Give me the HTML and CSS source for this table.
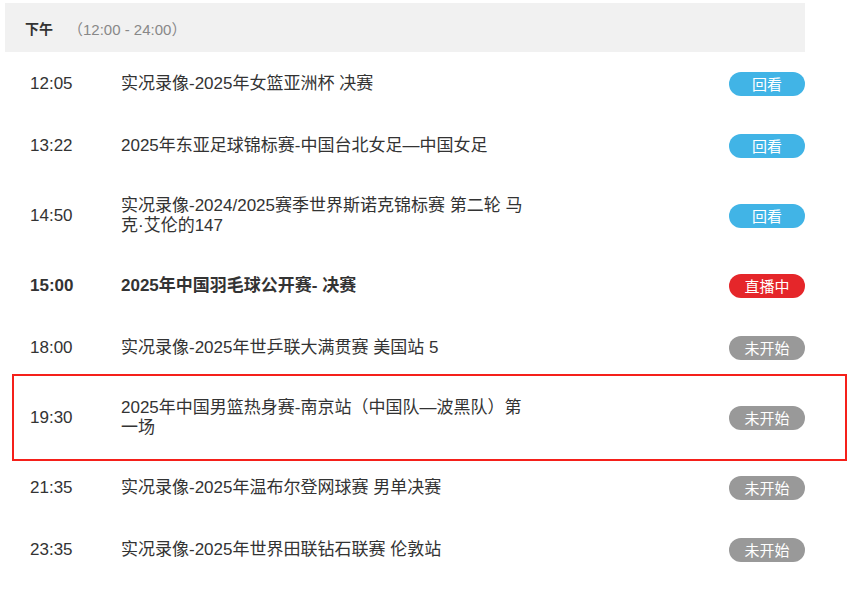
FILE: index.html
```html
<!DOCTYPE html>
<html lang="zh-CN">
<head>
<meta charset="utf-8">
<title>节目单</title>
<link rel="stylesheet" href="styles.css">
</head>
<body>
<div class="schedule">
  <div class="period">
    <span class="period-name">下午</span>
    <span class="period-range">（12:00 - 24:00）</span>
  </div>
  <ul class="list">
    <li class="row">
      <span class="time">12:05</span>
      <span class="title">实况录像-2025年女篮亚洲杯 决赛</span>
      <span class="badge badge-replay">回看</span>
    </li>
    <li class="row">
      <span class="time">13:22</span>
      <span class="title">2025年东亚足球锦标赛-中国台北女足—中国女足</span>
      <span class="badge badge-replay">回看</span>
    </li>
    <li class="row">
      <span class="time">14:50</span>
      <span class="title">实况录像-2024/2025赛季世界斯诺克锦标赛 第二轮 马<br>克·艾伦的147</span>
      <span class="badge badge-replay">回看</span>
    </li>
    <li class="row row-live">
      <span class="time">15:00</span>
      <span class="title">2025年中国羽毛球公开赛- 决赛</span>
      <span class="badge badge-live">直播中</span>
    </li>
    <li class="row">
      <span class="time">18:00</span>
      <span class="title">实况录像-2025年世乒联大满贯赛 美国站 5</span>
      <span class="badge badge-wait">未开始</span>
    </li>
    <li class="row row-marked">
      <span class="time">19:30</span>
      <span class="title">2025年中国男篮热身赛-南京站（中国队—波黑队）第<br>一场</span>
      <span class="badge badge-wait">未开始</span>
    </li>
    <li class="row">
      <span class="time">21:35</span>
      <span class="title">实况录像-2025年温布尔登网球赛 男单决赛</span>
      <span class="badge badge-wait">未开始</span>
    </li>
    <li class="row">
      <span class="time">23:35</span>
      <span class="title">实况录像-2025年世界田联钻石联赛 伦敦站</span>
      <span class="badge badge-wait">未开始</span>
    </li>
  </ul>
</div>
</body>
</html>
```
FILE: styles.css
```css
html, body {
  margin: 0;
  padding: 0;
  background: #fff;
}

body {
  font-family: "Liberation Sans", "Noto Sans CJK SC", sans-serif;
  color: #333;
}

.schedule {
  width: 800px;
  padding: 3px 0 0 5px;
}

.period {
  height: 49px;
  background: #f1f1f1;
  display: flex;
  align-items: center;
  padding: 1px 0 0 20px;
  box-sizing: border-box;
  font-size: 14px;
}

.period-name {
  font-weight: bold;
  color: #333;
}

.period-range {
  color: #888;
  font-size: 15px;
  margin-left: 15px;
}

.list {
  list-style: none;
  margin: 0;
  padding: 0;
}

.row {
  display: flex;
  align-items: center;
  padding: 20px 0 18px 25px;
  min-height: 24px;
  font-size: 17px;
  line-height: 20px;
}

.row-live {
  font-weight: bold;
}

.row-marked {
  position: relative;
}

.row-marked::after {
  content: "";
  position: absolute;
  left: 7px;
  right: -42px;
  top: -4px;
  bottom: -5px;
  border: 2px solid #f5201a;
  pointer-events: none;
}

.time {
  width: 91px;
  flex: none;
}

.title {
  flex: 1;
}

.badge {
  flex: none;
  width: 76px;
  height: 24px;
  border-radius: 12px;
  color: #fff;
  font-size: 15px;
  line-height: 24px;
  text-align: center;
  font-weight: normal;
  font-family: "Noto Sans CJK SC", sans-serif;
}

.badge-replay {
  background: #41b4e6;
}

.badge-live {
  background: #e5262a;
}

.badge-wait {
  background: #999;
}
```
